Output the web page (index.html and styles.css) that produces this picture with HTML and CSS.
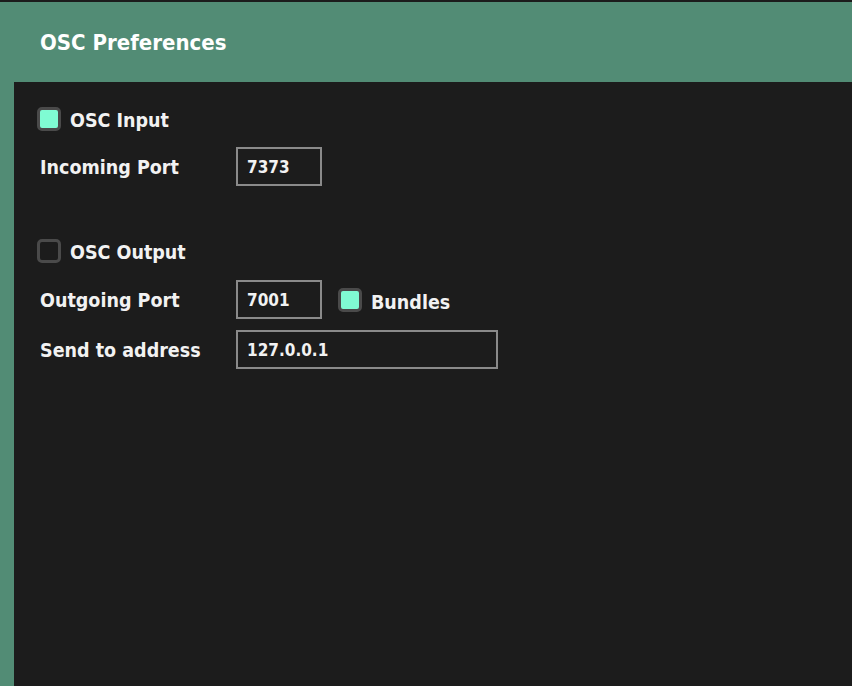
FILE: index.html
```html
<!DOCTYPE html>
<html>
<head>
<meta charset="utf-8">
<link rel="stylesheet" href="styles.css">
</head>
<body>
<div class="window">
  <header class="header"><h1 class="title">OSC Preferences</h1></header>
  <main class="panel">
    <div class="check-row first">
      <span class="checkbox checked"></span><span class="text">OSC Input</span>
    </div>
    <div class="field-row gap-a">
      <span class="label">Incoming Port</span>
      <span class="input port">7373</span>
    </div>
    <div class="check-row gap-b">
      <span class="checkbox"></span><span class="text">OSC Output</span>
    </div>
    <div class="field-row gap-c">
      <span class="label">Outgoing Port</span>
      <span class="input port">7001</span>
      <span class="checkbox checked bundles"></span><span class="text low">Bundles</span>
    </div>
    <div class="field-row gap-d">
      <span class="label">Send to address</span>
      <span class="input address">127.0.0.1</span>
    </div>
  </main>
</div>
</body>
</html>
```
FILE: styles.css
```css
html, body {
  margin: 0;
  padding: 0;
  height: 100%;
  background: #1c1c1c;
  overflow: hidden;
}
body {
  font-family: "DejaVu Sans Condensed", "DejaVu Sans", sans-serif;
  font-weight: bold;
  color: #f2f2f2;
}
.window {
  margin-top: 2px;
  height: calc(100% - 2px);
  background: #528c75;
  padding-left: 14px;
  display: flex;
  flex-direction: column;
}
.header {
  height: 80px;
  flex: none;
  display: flex;
  align-items: center;
}
.title {
  margin: 0 0 0 26px;
  font-size: 22px;
  font-weight: bold;
  color: #ffffff;
}
.panel {
  flex: 1;
  background: #1c1c1c;
  padding: 25px 0 0 23px;
}
.check-row {
  display: flex;
  align-items: center;
  height: 24px;
  font-size: 19.5px;
}
.checkbox {
  box-sizing: border-box;
  width: 24px;
  height: 24px;
  border: 3px solid #4a4a4a;
  border-radius: 5px;
  background: transparent;
  flex: none;
}
.checkbox.checked {
  background: #7ffcd3;
}
.text {
  margin-left: 9px;
  padding-top: 2px;
}
.text.low {
  padding-top: 5px;
}
.field-row {
  display: flex;
  align-items: center;
  height: 39px;
  font-size: 19.5px;
  padding-left: 3px;
}
.label {
  width: 196px;
  flex: none;
  padding-top: 1px;
}
.input {
  box-sizing: border-box;
  height: 39px;
  border: 2px solid #8a8a8a;
  padding: 1px 0 0 9px;
  display: flex;
  align-items: center;
  font-size: 17px;
  font-weight: bold;
}
.port { width: 86px; }
.address { width: 262px; }
.bundles { margin-left: 16px; }
.gap-a { margin-top: 16px; }
.gap-b { margin-top: 53px; }
.gap-c { margin-top: 17px; }
.gap-d { margin-top: 11px; }
```
